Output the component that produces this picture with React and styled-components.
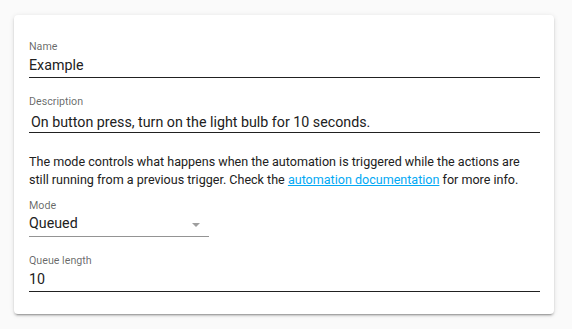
import React from "react";
import styled, { createGlobalStyle } from "styled-components";

const GlobalStyle = createGlobalStyle`
  body {
    margin: 0;
    background: #fafafa;
    font-family: Roboto, "Noto Sans", sans-serif;
    -webkit-font-smoothing: antialiased;
  }
`;

export default () => (
  <>
    <GlobalStyle />
    <Page>
      <Card>
        <Field>
          <Label>Name</Label>
          <Value>Example</Value>
        </Field>
        <Field $gap={17} $pad={0}>
          <Label>Description</Label>
          <Value $top={3} $indent={2}>
            On button press, turn on the light bulb for 10 seconds.
          </Value>
        </Field>
        <Intro>
          The mode controls what happens when the automation is triggered while the actions are
          still running from a previous trigger. Check the{" "}
          <DocLink href="#">automation documentation</DocLink> for more info.
        </Intro>
        <Field $gap={10} $width={180} $line="rgba(0, 0, 0, 0.42)">
          <Label>Mode</Label>
          <SelectRow>
            <Value $top={0}>Queued</Value>
            <Arrow width="8" height="4" viewBox="0 0 8 4">
              <path d="M0 0h8L4 4z" fill="#9e9e9e" />
            </Arrow>
          </SelectRow>
        </Field>
        <Field $gap={17}>
          <Label>Queue length</Label>
          <Value>10</Value>
        </Field>
      </Card>
    </Page>
  </>
);

const Page = styled.div`
  padding: 15px 18px 16px 14px;
`;
const Card = styled.div`
  background: #fff;
  border-radius: 4px;
  box-shadow: 0 2px 2px 0 rgba(0, 0, 0, 0.14), 0 1px 5px 0 rgba(0, 0, 0, 0.12),
    0 3px 1px -2px rgba(0, 0, 0, 0.2);
  padding: 25px 14px 22px 15px;
  display: flex;
  flex-direction: column;
  align-items: flex-start;
`;
const Field = styled.div`
  margin-top: ${(p) => p.$gap || 0}px;
  width: ${(p) => (p.$width ? `${p.$width}px` : "100%")};
  box-sizing: border-box;
  padding-bottom: ${(p) => (p.$pad ?? 2)}px;
  border-bottom: 1px solid ${(p) => p.$line || "rgba(0, 0, 0, 0.87)"};
`;
const Label = styled.div`
  font-size: 10.7px;
  line-height: 14px;
  color: rgba(0, 0, 0, 0.6);
`;
const Value = styled.div`
  margin-top: ${(p) => p.$top ?? 1}px;
  padding-left: ${(p) => p.$indent || 0}px;
  font-size: 14.25px;
  line-height: 20px;
  color: #212121;
`;
const SelectRow = styled.div`
  display: flex;
  align-items: center;
  justify-content: space-between;
  padding-right: 9px;
  padding-bottom: 1px;
`;
const Arrow = styled.svg`
  margin-top: 3px;
`;
const Intro = styled.p`
  margin: 20px 0 0;
  padding-right: 12px;
  font-size: 12.55px;
  line-height: 18.2px;
  color: #212121;
`;
const DocLink = styled.a`
  color: #03a9f4;
  text-decoration: underline;
`;
